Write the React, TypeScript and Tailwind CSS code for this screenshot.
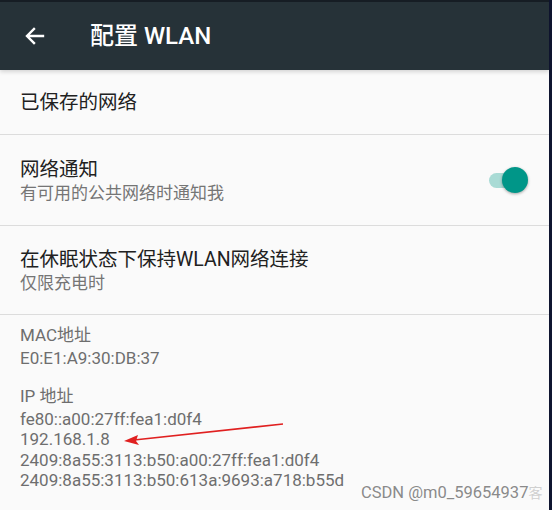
import React from 'react';

const font = { fontFamily: '"Roboto", "Noto Sans CJK SC", sans-serif' };

const Row = ({ title, sub, h, children }: { title: string; sub?: string; h: string; children?: React.ReactNode }) => (
  <div className={`flex items-center justify-between border-b border-[#dcdcdc] pl-5 pr-6 ${h}`}>
    <div className="flex flex-col pt-[2px]">
      <div className="text-[19.5px] leading-[24px] text-[#212121]">{title}</div>
      {sub && <div className="text-[17px] leading-[23px] text-[#757575]">{sub}</div>}
    </div>
    {children}
  </div>
);

export default function App() {
  return (
    <div className="flex h-[510px] w-[552px] overflow-hidden bg-[#0f1530]" style={font}>
      <div className="relative flex h-full w-[549px] flex-col bg-[#fafafa]">
        {/* Toolbar */}
        <div className="flex h-[70px] shrink-0 items-center border-t-2 border-[#161d24] bg-[#263238] shadow-[0_2px_4px_rgba(0,0,0,0.15)]">
          <svg className="ml-[23px] h-6 w-6" viewBox="0 0 24 24" fill="none" stroke="#fff" strokeWidth="2.4" strokeLinecap="square">
            <path d="M20 12H5M11 5l-7 7 7 7" />
          </svg>
          <div className="ml-[43px] text-[24px] font-medium text-white">配置 WLAN</div>
        </div>

        <Row h="h-[65px] shrink-0" title="已保存的网络" />
        <Row h="h-[91px] shrink-0" title="网络通知" sub="有可用的公共网络时通知我">
          <div className="relative flex h-6 w-[38px] items-center">
            <div className="ml-[2px] h-[15px] w-[34px] rounded-full bg-[#a9dbd5]" />
            <div className="absolute right-[-3px] top-[-1px] h-[26px] w-[26px] rounded-full bg-[#009688] shadow-[0_1px_3px_rgba(0,0,0,0.35)]" />
          </div>
        </Row>
        <Row h="h-[89px] shrink-0" title="在休眠状态下保持WLAN网络连接" sub="仅限充电时" />

        <div className="flex flex-col pl-5 pt-[10px] text-[17px] leading-[20.5px] text-[#6e6e6e]">
          <div className="mb-[2px]">MAC地址</div>
          <div>E0:E1:A9:30:DB:37</div>
          <div className="mb-[2px] mt-[18px]">IP 地址</div>
          <div>fe80::a00:27ff:fea1:d0f4</div>
          <div>192.168.1.8</div>
          <div>2409:8a55:3113:b50:a00:27ff:fea1:d0f4</div>
          <div>2409:8a55:3113:b50:613a:9693:a718:b55d</div>
        </div>

        {/* annotation arrow */}
        <svg className="absolute left-0 top-0" width="549" height="510" viewBox="0 0 549 510">
          <line x1="283" y1="424" x2="134" y2="440" stroke="#e02020" strokeWidth="1.6" />
          <path d="M124 441 L138 435 L136 441 L139 445 Z" fill="#e02020" />
        </svg>

        {/* watermark */}
        <div className="absolute left-[361px] top-[481px] flex items-baseline text-[16.5px] text-[#8a8a8a] [text-shadow:0_0_2px_#fff]">
          <span>CSDN @m0_59654937</span>
          <span className="text-[14px] text-[#d0d0d0]">客</span>
        </div>
      </div>
    </div>
  );
}
